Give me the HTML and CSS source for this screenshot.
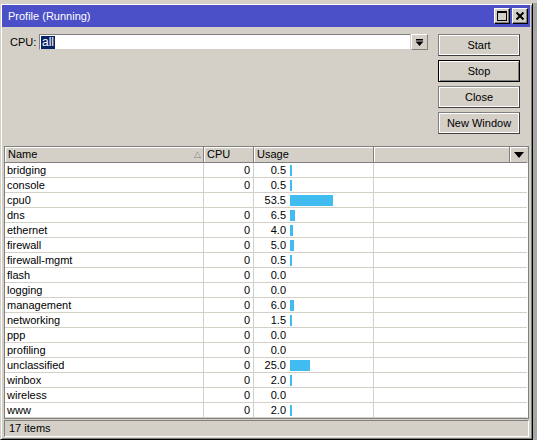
FILE: index.html
```html
<!DOCTYPE html>
<html>
<head>
<meta charset="utf-8">
<link rel="stylesheet" href="styles.css">
</head>
<body>
<div class="desk">
  <div class="window">
    <div class="titlebar">
      <span class="title">Profile (Running)</span>
      <div class="tbtns">
        <span class="tbtn"><svg width="12" height="12" viewBox="0 0 12 12"><rect x="1.5" y="1.5" width="9" height="9" fill="none" stroke="#000" stroke-width="1"/><line x1="1" y1="2" x2="11" y2="2" stroke="#000" stroke-width="2"/></svg></span>
        <span class="tbtn"><svg width="12" height="12" viewBox="0 0 12 12"><path d="M2.5 2.5 L9.5 9.5 M9.5 2.5 L2.5 9.5" stroke="#000" stroke-width="2"/></svg></span>
      </div>
    </div>
    <div class="body">
      <div class="top">
        <div class="cpurow">
          <span class="label">CPU:</span>
          <div class="combo"><span class="sel">all</span></div>
          <span class="dropbtn"><svg width="9" height="9" viewBox="0 0 9 9"><rect x="1" y="1" width="7" height="1.5" fill="#000"/><path d="M0.5 3.5 H8.5 L4.5 8 Z" fill="#000"/></svg></span>
        </div>
        <div class="btns">
          <div class="btn">Start</div>
          <div class="btn def">Stop</div>
          <div class="btn">Close</div>
          <div class="btn">New Window</div>
        </div>
      </div>
      <div class="table">
        <div class="thead">
          <div class="th name">Name<span class="sort">&#9651;</span></div>
          <div class="th cpu">CPU</div>
          <div class="th usage">Usage</div>
          <div class="th blank"></div>
          <div class="th menu"><svg width="10" height="6" viewBox="0 0 10 6"><path d="M0 0 H10 L5 6 Z" fill="#000"/></svg></div>
        </div>
        <div class="tbody">
          <div class="row"><div class="c name">bridging</div><div class="c cpu">0</div><div class="c usage"><span class="num">0.5</span><span class="bar" style="width:2px"></span></div><div class="c rest"></div></div>
          <div class="row"><div class="c name">console</div><div class="c cpu">0</div><div class="c usage"><span class="num">0.5</span><span class="bar" style="width:2px"></span></div><div class="c rest"></div></div>
          <div class="row"><div class="c name">cpu0</div><div class="c cpu"></div><div class="c usage"><span class="num">53.5</span><span class="bar" style="width:43px"></span></div><div class="c rest"></div></div>
          <div class="row"><div class="c name">dns</div><div class="c cpu">0</div><div class="c usage"><span class="num">6.5</span><span class="bar" style="width:5px"></span></div><div class="c rest"></div></div>
          <div class="row"><div class="c name">ethernet</div><div class="c cpu">0</div><div class="c usage"><span class="num">4.0</span><span class="bar" style="width:3px"></span></div><div class="c rest"></div></div>
          <div class="row"><div class="c name">firewall</div><div class="c cpu">0</div><div class="c usage"><span class="num">5.0</span><span class="bar" style="width:4px"></span></div><div class="c rest"></div></div>
          <div class="row"><div class="c name">firewall-mgmt</div><div class="c cpu">0</div><div class="c usage"><span class="num">0.5</span><span class="bar" style="width:2px"></span></div><div class="c rest"></div></div>
          <div class="row"><div class="c name">flash</div><div class="c cpu">0</div><div class="c usage"><span class="num">0.0</span></div><div class="c rest"></div></div>
          <div class="row"><div class="c name">logging</div><div class="c cpu">0</div><div class="c usage"><span class="num">0.0</span></div><div class="c rest"></div></div>
          <div class="row"><div class="c name">management</div><div class="c cpu">0</div><div class="c usage"><span class="num">6.0</span><span class="bar" style="width:4px"></span></div><div class="c rest"></div></div>
          <div class="row"><div class="c name">networking</div><div class="c cpu">0</div><div class="c usage"><span class="num">1.5</span><span class="bar" style="width:2px"></span></div><div class="c rest"></div></div>
          <div class="row"><div class="c name">ppp</div><div class="c cpu">0</div><div class="c usage"><span class="num">0.0</span></div><div class="c rest"></div></div>
          <div class="row"><div class="c name">profiling</div><div class="c cpu">0</div><div class="c usage"><span class="num">0.0</span></div><div class="c rest"></div></div>
          <div class="row"><div class="c name">unclassified</div><div class="c cpu">0</div><div class="c usage"><span class="num">25.0</span><span class="bar" style="width:20px"></span></div><div class="c rest"></div></div>
          <div class="row"><div class="c name">winbox</div><div class="c cpu">0</div><div class="c usage"><span class="num">2.0</span><span class="bar" style="width:2px"></span></div><div class="c rest"></div></div>
          <div class="row"><div class="c name">wireless</div><div class="c cpu">0</div><div class="c usage"><span class="num">0.0</span></div><div class="c rest"></div></div>
          <div class="row"><div class="c name">www</div><div class="c cpu">0</div><div class="c usage"><span class="num">2.0</span><span class="bar" style="width:2px"></span></div><div class="c rest"></div></div>
        </div>
      </div>
      <div class="status">17 items</div>
    </div>
  </div>
</div>
</body>
</html>
```
FILE: styles.css
```css
* { box-sizing: border-box; }
html, body { margin: 0; padding: 0; }
body {
  width: 537px;
  height: 445px;
  overflow: hidden;
  background: #a8a8a8;
  font-family: "Liberation Sans", Arial, sans-serif;
  font-size: 11px;
  color: #000;
}
.desk {
  padding-top: 3px;
  height: 445px;
  background: linear-gradient(#d4d0c8 0, #d4d0c8 3px, #a8a8a8 3px, #a8a8a8 440px, #fff 440px);
}
.window {
  width: 533px;
  height: 437px;
  background: #d4d0c8;
  border-top: 1px solid #d4d0c8;
  border-left: 1px solid #d4d0c8;
  border-right: 1px solid #000;
  border-bottom: 1px solid #000;
  box-shadow: inset 1px 1px 0 #fff, inset -1px -1px 0 #808080;
  padding: 1px 2px 2px 1px;
  display: flex;
  flex-direction: column;
}
.titlebar {
  height: 22px;
  background: #4b4fc8;
  display: flex;
  align-items: center;
  justify-content: space-between;
  padding: 0 2px 0 6px;
  flex: none;
}
.title {
  color: #fff;
  font-size: 11px;
}
.tbtns { display: flex; gap: 2px; }
.tbtn {
  width: 16px;
  height: 16px;
  background: #d4d0c8;
  border: 1px solid;
  border-color: #fff #000 #000 #fff;
  box-shadow: inset -1px -1px 0 #808080;
  display: flex;
  align-items: center;
  justify-content: center;
}
.body {
  flex: 1;
  display: flex;
  flex-direction: column;
  padding: 0 1px 0 2px;
}
.top {
  height: 119px;
  flex: none;
  display: flex;
  padding: 7px 0 0 6px;
}
.cpurow {
  display: flex;
  align-items: flex-start;
}
.label {
  width: 29px;
  height: 16px;
  line-height: 16px;
}
.combo {
  width: 372px;
  height: 16px;
  background: #fff;
  border: 1px solid;
  border-color: #808080 #d4d0c8 #d4d0c8 #808080;
  padding: 0 1px;
  display: flex;
  align-items: center;
}
.sel {
  background: #0a246a;
  color: #fff;
  font-size: 12px;
  line-height: 13px;
  padding: 0 1px;
}
.dropbtn {
  width: 17px;
  height: 16px;
  background: #d4d0c8;
  border: 1px solid;
  border-color: #fff #808080 #808080 #fff;
  display: flex;
  align-items: center;
  justify-content: center;
}
.btns {
  width: 82px;
  margin-left: 10px;
  display: flex;
  flex-direction: column;
  gap: 4px;
}
.btn {
  height: 22px;
  border: 1px solid;
  border-color: #808080 #404040 #404040 #808080;
  box-shadow: inset 1px 1px 0 #fff, inset -1px -1px 0 #fff;
  background: #d4d0c8;
  display: flex;
  align-items: center;
  justify-content: center;
  font-size: 11px;
}
.btn.def {
  border: 1px solid #000;
  box-shadow: inset 1px 1px 0 #fff, inset -1px -1px 0 #808080;
}
.table {
  flex: none;
  height: 273px;
  border: 1px solid #808080;
  background: #fff;
  overflow: hidden;
}
.thead {
  display: grid;
  grid-template-columns: 199px 50px 120px 136px 17px;
  height: 16px;
  background: #d4d0c8;
}
.th {
  border-right: 1px solid #808080;
  border-bottom: 1px solid #808080;
  box-shadow: inset 1px 1px 0 #fff;
  padding: 0 3px;
  line-height: 15px;
  font-size: 11px;
  position: relative;
}
.th.menu {
  border-right: none;
  display: flex;
  align-items: center;
  justify-content: center;
  padding: 0;
}
.sort {
  position: absolute;
  right: 2px;
  top: 0;
  font-size: 9px;
  color: #808080;
}
.row {
  display: grid;
  grid-template-columns: 199px 50px 120px 153px;
  height: 15px;
}
.c {
  border-right: 1px solid #d4d0c8;
  border-bottom: 1px solid #d4d0c8;
  line-height: 14px;
  padding: 0 2px;
  white-space: nowrap;
  font-size: 11px;
}
.c.cpu { text-align: right; padding-right: 3px; }
.c.rest { border-right: none; }
.c.usage {
  display: flex;
  align-items: center;
  padding: 0;
}
.num {
  width: 32px;
  text-align: right;
  flex: none;
}
.bar {
  display: block;
  height: 11px;
  background: #41bcf1;
  margin-left: 4px;
}
.status {
  flex: none;
  margin-top: 1px;
  height: 17px;
  border: 1px solid;
  border-color: #808080 #fff #fff #808080;
  padding: 0 4px;
  line-height: 15px;
  font-size: 11px;
}
```
